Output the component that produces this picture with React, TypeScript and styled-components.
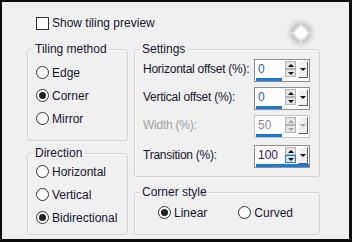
import React from 'react';
import styled, { createGlobalStyle } from 'styled-components';

const GlobalStyle = createGlobalStyle`
  body {
    margin: 0;
    background: #f0f0f0;
  }
`;

const Frame = styled.div`
  position: relative;
  box-sizing: border-box;
  width: 352px;
  height: 242px;
  border: solid #0d0d0d;
  border-width: 2px 3px 3px 2px;
  background: #f0f0f0;
  padding: 15px 0 0 25px;
  font-family: 'Liberation Sans', Arial, sans-serif;
  font-size: 12px;
  color: #16162e;
`;

const CheckRow = styled.label`
  display: flex;
  align-items: center;
  gap: 3px;
  height: 13px;
  padding-left: 9px;
  line-height: 13px;
`;

const CheckBox = styled.span`
  box-sizing: border-box;
  width: 13px;
  height: 13px;
  border: 1px solid #333;
  background: #fff;
`;

const Columns = styled.div`
  display: flex;
  align-items: flex-start;
  gap: 6px;
  margin-top: 12px;
`;

const Column = styled.div<{ $width: number; $gap: number }>`
  display: flex;
  flex-direction: column;
  width: ${p => p.$width}px;
  gap: ${p => p.$gap}px;
`;

const Group = styled.fieldset<{ $height: number; $top: number }>`
  box-sizing: border-box;
  margin: 0;
  min-width: 0;
  height: ${p => p.$height}px;
  padding: ${p => p.$top}px 9px 0 8px;
  border: 1px solid #d4d4d4;
  border-radius: 3px;
  box-shadow: inset 1px 1px 0 #fafafa;
  display: flex;
  flex-direction: column;
`;

const Legend = styled.legend`
  padding: 0 2px;
  margin-left: -3px;
  line-height: 14px;
  font-size: 12px;
`;

const RadioOption = styled.label<{ $height?: number }>`
  display: flex;
  align-items: center;
  gap: 3px;
  height: ${p => p.$height ?? 23}px;
  white-space: nowrap;
`;

const Radio = styled.span<{ $checked?: boolean }>`
  position: relative;
  box-sizing: border-box;
  width: 13px;
  height: 13px;
  border: 1px solid #333;
  border-radius: 50%;
  background: #fff;

  &::after {
    content: '';
    display: ${p => (p.$checked ? 'block' : 'none')};
    position: absolute;
    left: 2px;
    top: 2px;
    width: 7px;
    height: 7px;
    border-radius: 50%;
    background: #222;
  }
`;

const CornerRow = styled.div`
  display: flex;
  align-items: center;
  gap: 31px;
  margin-left: 15px;
`;

const SettingRow = styled.div<{ $space: number }>`
  display: flex;
  align-items: center;
  justify-content: space-between;
  height: 23px;
  margin-top: ${p => p.$space}px;
`;

const Label = styled.span<{ $disabled?: boolean }>`
  padding-bottom: 3px;
  white-space: nowrap;
  letter-spacing: -0.25px;
  color: ${p => (p.$disabled ? '#a3a3a3' : '#16162e')};
`;

const Spin = styled.div<{ $disabled?: boolean }>`
  box-sizing: border-box;
  width: 56px;
  height: 23px;
  border: 1px solid ${p => (p.$disabled ? '#c8c8c8' : '#8e8e8e')};
  background: #fff;
  display: flex;
  flex-direction: column;
`;

const SpinTop = styled.div`
  flex: 1;
  display: flex;
  align-items: center;
  padding-right: 1px;
`;

const Value = styled.span<{ $color: string }>`
  flex: 1;
  padding-left: 3px;
  color: ${p => p.$color};
  font-size: 12px;
`;

const StepPair = styled.div`
  display: flex;
  flex-direction: column;
  width: 11px;
  margin-right: 2px;
`;

const StepButton = styled.span<{ $hot?: boolean }>`
  box-sizing: border-box;
  height: 8px;
  display: flex;
  align-items: center;
  justify-content: center;
  border: 1px solid ${p => (p.$hot ? '#2b7bd4' : '#b4b4b4')};
  background: ${p => (p.$hot ? '#cce4f7' : '#e6e6e6')};
`;

const Arrow = styled.span<{ $up?: boolean; $dim?: boolean }>`
  width: 0;
  height: 0;
  border-left: 3px solid transparent;
  border-right: 3px solid transparent;
  ${p =>
    p.$up
      ? `border-bottom: 3px solid ${p.$dim ? '#a8a8a8' : '#111'};`
      : `border-top: 3px solid ${p.$dim ? '#a8a8a8' : '#111'};`}
`;

const DropButton = styled.span`
  box-sizing: border-box;
  width: 10px;
  height: 17px;
  display: flex;
  align-items: center;
  justify-content: center;
  background: #efefef;
  border: 1px solid;
  border-color: #fff #5e5e5e #5e5e5e #fff;
`;

const Bar = styled.div<{ $full?: boolean }>`
  height: 3px;
  margin-left: 1px;
  width: ${p => (p.$full ? 'calc(100% - 1px)' : '26px')};
  background: #1a78d6;
`;

const Sparkle = styled.svg`
  position: absolute;
  left: 281px;
  top: 13px;
`;

type SpinProps = {
  value: string;
  color: string;
  full?: boolean;
  disabled?: boolean;
  hot?: boolean;
};

const SpinBox: React.FC<SpinProps> = ({ value, color, full, disabled, hot }) => (
  <Spin $disabled={disabled}>
    <SpinTop>
      <Value $color={color}>{value}</Value>
      <StepPair>
        <StepButton>
          <Arrow $up $dim={disabled} />
        </StepButton>
        <StepButton $hot={hot}>
          <Arrow $dim={disabled} />
        </StepButton>
      </StepPair>
      <DropButton>
        <Arrow $dim={disabled} />
      </DropButton>
    </SpinTop>
    <Bar $full={full} />
  </Spin>
);

export default function App() {
  return (
    <>
      <GlobalStyle />
      <Frame>
        <CheckRow>
          <CheckBox />
          Show tiling preview
        </CheckRow>

        <Columns>
          <Column $width={101} $gap={5}>
            <Group $height={99} $top={5}>
              <Legend>Tiling method</Legend>
              <RadioOption>
                <Radio />
                Edge
              </RadioOption>
              <RadioOption>
                <Radio $checked />
                Corner
              </RadioOption>
              <RadioOption>
                <Radio />
                Mirror
              </RadioOption>
            </Group>
            <Group $height={89} $top={0}>
              <Legend>Direction</Legend>
              <RadioOption>
                <Radio />
                Horizontal
              </RadioOption>
              <RadioOption>
                <Radio />
                Vertical
              </RadioOption>
              <RadioOption>
                <Radio $checked />
                Bidirectional
              </RadioOption>
            </Group>
          </Column>

          <Column $width={186} $gap={8}>
            <Group $height={135} $top={3}>
              <Legend>Settings</Legend>
              <SettingRow $space={0}>
                <Label>Horizontal offset (%):</Label>
                <SpinBox value="0" color="#1f5fd0" />
              </SettingRow>
              <SettingRow $space={5}>
                <Label>Vertical offset (%):</Label>
                <SpinBox value="0" color="#1f5fd0" />
              </SettingRow>
              <SettingRow $space={5}>
                <Label $disabled>Width (%):</Label>
                <SpinBox value="50" color="#8c8c8c" disabled />
              </SettingRow>
              <SettingRow $space={7}>
                <Label>Transition (%):</Label>
                <SpinBox value="100" color="#3a1466" full hot />
              </SettingRow>
            </Group>
            <Group $height={50} $top={7}>
              <Legend>Corner style</Legend>
              <CornerRow>
                <RadioOption $height={13}>
                  <Radio $checked />
                  Linear
                </RadioOption>
                <RadioOption $height={13}>
                  <Radio />
                  Curved
                </RadioOption>
              </CornerRow>
            </Group>
          </Column>
        </Columns>

        <Sparkle width="36" height="36" viewBox="0 0 36 36">
          <defs>
            <radialGradient id="halo">
              <stop offset="0" stopColor="#ffffff" />
              <stop offset="0.25" stopColor="#ffffff" />
              <stop offset="0.5" stopColor="#c6c6c6" />
              <stop offset="1" stopColor="#f0f0f0" stopOpacity="0" />
            </radialGradient>
          </defs>
          <circle cx="18" cy="18" r="17" fill="url(#halo)" />
          <path
            d="M18 5 L19.1 16.9 L31 18 L19.1 19.1 L18 31 L16.9 19.1 L5 18 L16.9 16.9 Z"
            fill="#fff"
          />
        </Sparkle>
      </Frame>
    </>
  );
}
